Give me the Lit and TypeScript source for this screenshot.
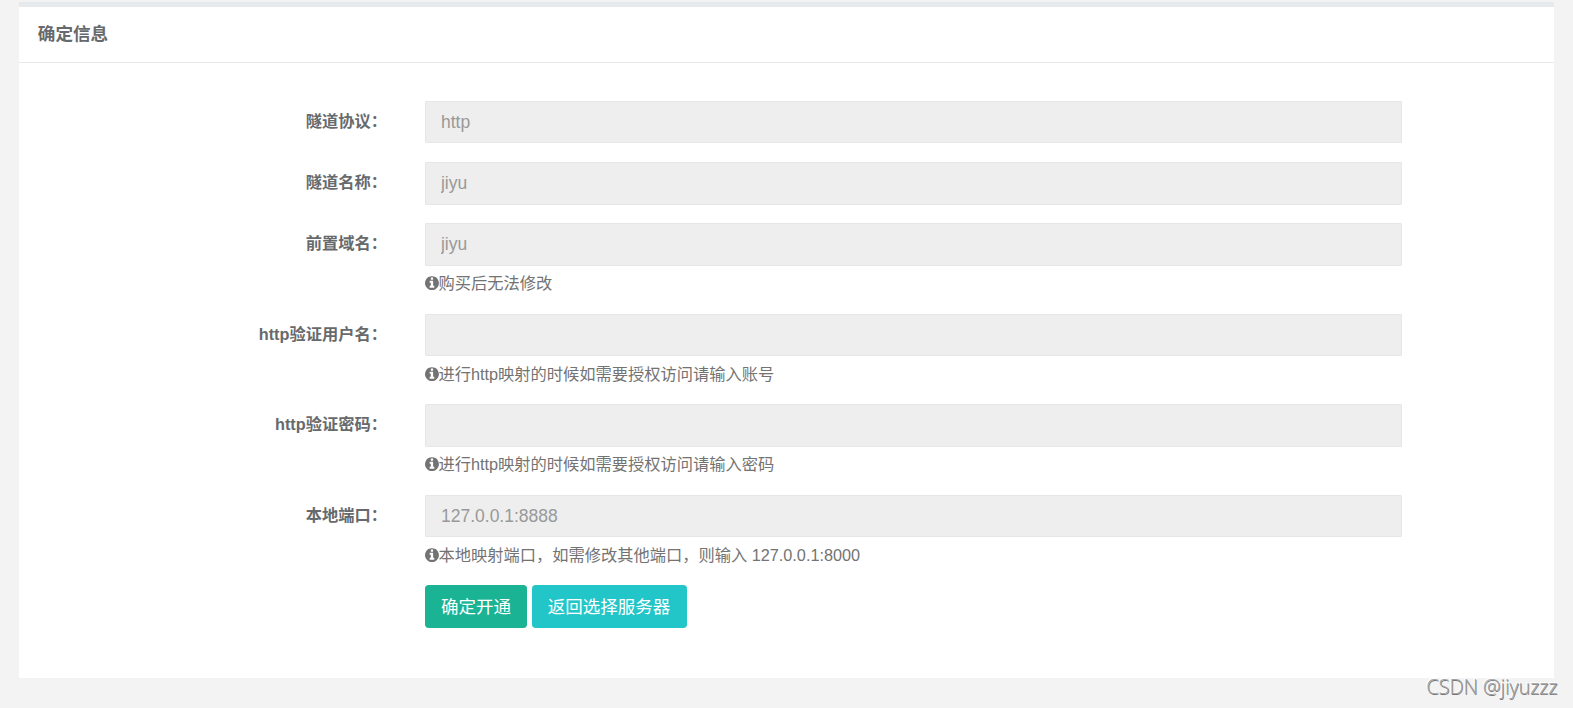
import { LitElement, html, css, svg, nothing } from "lit";
import { customElement, property } from "lit/decorators.js";

interface Field {
  label: string;
  value: string;
  help?: string;
}

const FIELDS: Field[] = [
  { label: "隧道协议：", value: "http" },
  { label: "隧道名称：", value: "jiyu" },
  { label: "前置域名：", value: "jiyu", help: "购买后无法修改" },
  { label: "http验证用户名：", value: "", help: "进行http映射的时候如需要授权访问请输入账号" },
  { label: "http验证密码：", value: "", help: "进行http映射的时候如需要授权访问请输入密码" },
  { label: "本地端口：", value: "127.0.0.1:8888", help: "本地映射端口，如需修改其他端口，则输入 127.0.0.1:8000" },
];

const infoIcon = svg`<path d="M1024 1376v-160q0-14-9-23t-23-9h-96v-512q0-14-9-23t-23-9h-320q-14 0-23 9t-9 23v160q0 14 9 23t23 9h96v320h-96q-14 0-23 9t-9 23v160q0 14 9 23t23 9h448q14 0 23-9t9-23zm-128-896v-160q0-14-9-23t-23-9h-192q-14 0-23 9t-9 23v160q0 14 9 23t23 9h192q14 0 23-9t9-23zm640 416q0 209-103 385.500t-279.500 279.500-385.500 103-385.500-103-279.500-279.500-103-385.500 103-385.500 279.500-279.500 385.500-103 385.500 103 279.500 279.500 103 385.500z"/>`;

@customElement("form-row")
export class FormRow extends LitElement {
  @property({ attribute: false }) field!: Field;

  static styles = css`
    :host {
      display: grid;
      grid-template-columns: 386.9px 977px;
      column-gap: 38.1px;
      margin-bottom: 18.75px;
    }
    .label {
      text-align: right;
      font-weight: 600;
      padding-top: 8.75px;
      line-height: 23.2px;
      white-space: nowrap;
    }
    .input {
      display: block;
      box-sizing: border-box;
      width: 100%;
      height: 42.5px;
      padding: 7.5px 15px;
      border: 1px solid #e5e6e7;
      border-radius: 1px;
      background: #eee;
      color: #999;
      font: 17.5px "Liberation Sans", "Noto Sans CJK SC", sans-serif;
      opacity: 1;
    }
    .help {
      display: flex;
      align-items: center;
      height: 23px;
      margin-top: 6.25px;
      color: #737373;
      white-space: pre;
    }
    .icon {
      width: 13.93px;
      height: 16.25px;
      margin: 0 -0.5px 1px 0;
      fill: currentColor;
      flex: none;
    }
  `;

  render() {
    const { label, value, help } = this.field;
    return html`
      <label class="label">${label}</label>
      <div>
        <input class="input" .value=${value} disabled />
        ${help
          ? html`<div class="help"><svg class="icon" viewBox="0 0 1536 1792">${infoIcon}</svg><span>${help}</span></div>`
          : nothing}
      </div>
    `;
  }
}

@customElement("app-root")
export class AppRoot extends LitElement {
  static styles = css`
    :host {
      display: block;
      position: relative;
      box-sizing: border-box;
      height: 708px;
      padding: 2px 19px 0;
      overflow: hidden;
      background: #f3f3f3;
      color: #676a6c;
      font: 16.25px/23.2px "Liberation Sans", "Noto Sans CJK SC", sans-serif;
    }
    .card {
      box-sizing: border-box;
      height: 676px;
      border-top: 5px solid #e7eaec;
      background: #fff;
    }
    .head {
      box-sizing: border-box;
      height: 56px;
      padding: 17px 18.8px 0;
      border-bottom: 1px solid #e7e8e9;
    }
    .title {
      margin: 0;
      font-size: 17.6px;
      line-height: 20px;
      font-weight: 600;
    }
    .form {
      padding-top: 37.9px;
      margin-left: -19px;
    }
    .actions {
      display: flex;
      gap: 4.8px;
      padding-left: 425px;
    }
    .btn {
      box-sizing: border-box;
      height: 42.5px;
      padding: 0 16px;
      border: 0;
      border-radius: 3.75px;
      color: #fff;
      font: 17.5px/42px "Liberation Sans", "Noto Sans CJK SC", sans-serif;
      white-space: nowrap;
    }
    .primary { background: #1ab394; }
    .info { background: #23c6c8; padding-right: 16.5px; }
    .mark {
      position: absolute;
      right: 15.5px;
      bottom: 7px;
      font: 300 20px/28px "Open Sans", "Noto Sans", sans-serif;
      letter-spacing: -0.1px;
      color: #a2a2a2;
      text-shadow: 0.6px 0.6px 0 #777, -1px -1px 0 #fff;
    }
  `;

  render() {
    return html`
      <section class="card">
        <header class="head"><h5 class="title">确定信息</h5></header>
        <div class="form">
          ${FIELDS.map((f) => html`<form-row .field=${f}></form-row>`)}
          <div class="actions">
            <button class="btn primary">确定开通</button>
            <button class="btn info">返回选择服务器</button>
          </div>
        </div>
      </section>
      <div class="mark">CSDN @jiyuzzz</div>
    `;
  }
}
